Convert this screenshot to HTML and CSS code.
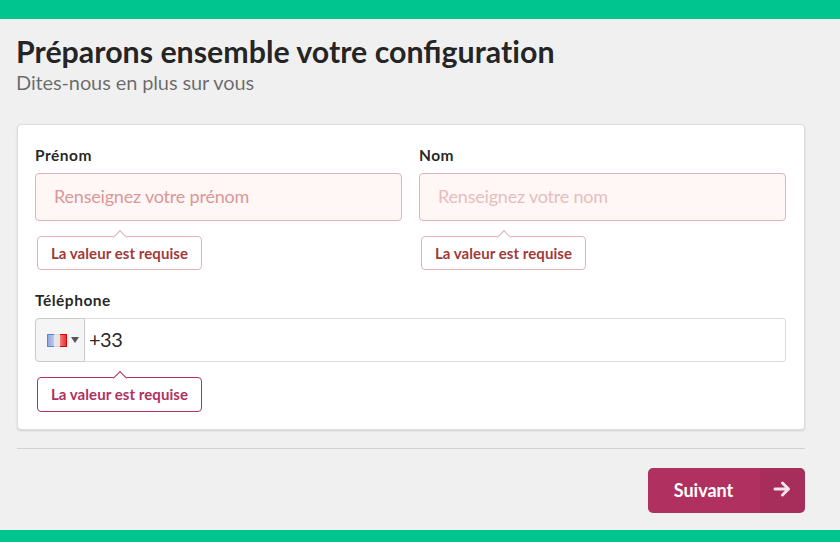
FILE: index.html
```
<!DOCTYPE html>
<html lang="fr">
<head>
    <meta charset="utf-8">
    <title>Configuration</title>
    <link rel="stylesheet" href="styles.css">
</head>
<body>
  <div class="container">
    <h1>Préparons ensemble votre configurat&zwnj;ion</h1>
    <div class="subheader">Dites-nous en plus sur vous</div>

    <form class="segment">
      <div class="fields">
        <div class="field error">
          <label for="firstname">Prénom</label>
          <input type="text" id="firstname" class="focused" placeholder="Renseignez votre prénom">
          <div class="prompt">La valeur est requise</div>
        </div>
        <div class="field error">
          <label for="lastname">Nom</label>
          <input type="text" id="lastname" placeholder="Renseignez votre nom">
          <div class="prompt">La valeur est requise</div>
        </div>
      </div>
      <div class="field phone">
        <label for="phone">Téléphone</label>
        <div class="phone-input">
          <div class="country">
            <svg class="flag" width="20" height="13" viewBox="0 0 20 13">
              <defs>
                <linearGradient id="blue">
                  <stop offset="0" stop-color="#8fa7e2"/>
                  <stop offset="1" stop-color="#bccaec"/>
                </linearGradient>
                <linearGradient id="red">
                  <stop offset="0" stop-color="#f47c7c"/>
                  <stop offset="1" stop-color="#ee3030"/>
                </linearGradient>
              </defs>
              <rect width="20" height="13" fill="#d6d6d6"/>
              <rect x="7" y="1" width="6" height="11" fill="#e9e7e6"/>
              <rect width="7" height="13" fill="#6384d4"/>
              <rect x="1" y="1" width="6" height="11" fill="url(#blue)"/>
              <rect x="13" width="7" height="13" fill="#e00000"/>
              <rect x="13" y="1" width="6" height="11" fill="url(#red)"/>
            </svg>
            <span class="caret"></span>
          </div>
          <input type="text" id="phone" value="+33">
        </div>
        <div class="prompt">La valeur est requise</div>
      </div>
    </form>

    <div class="divider"></div>

    <div class="actions">
      <button type="button" class="next">
        <span class="text">Suivant</span>
        <span class="icon">
          <svg width="18" height="18" viewBox="0 0 18 18">
            <path d="M2 9H15M9.5 3L15.5 9L9.5 15" fill="none" stroke="#f3e3ea" stroke-width="3" stroke-linecap="round" stroke-linejoin="round"/>
          </svg>
        </span>
      </button>
    </div>
  </div>
</body>
</html>
```
FILE: styles.css
```
* {
    box-sizing: border-box;
}

body {
    margin: 0;
    height: 542px;
    border-top: 19px solid #00c58e;
    border-bottom: 12px solid #00c58e;
    background: #f0f0f0;
    color: rgba(0, 0, 0, 0.87);
    font-family: Lato, sans-serif;
    overflow: hidden;
}

.container {
    width: 788px;
    margin-left: 17px;
    padding-top: 13px;
}

h1 {
    margin: 0 0 0 -1px;
    font-size: 30.35px;
    line-height: 38px;
    font-weight: 700;
}

.subheader {
    height: 24px;
    margin-left: -1px;
    font-size: 20px;
    line-height: 24px;
    font-weight: 400;
    letter-spacing: -0.12px;
    color: rgba(0, 0, 0, 0.57);
}

.segment {
    height: 306px;
    margin: 30px 0 0;
    padding: 20px 18px 0 17px;
    background: #fff;
    border: 1px solid #dcdddd;
    border-radius: 4px;
    box-shadow: 0 1px 2px 0 rgba(34, 36, 38, 0.15);
}

.fields {
    display: flex;
    gap: 17px;
}

.field {
    flex: 1;
}

label {
    display: block;
    height: 20px;
    margin-bottom: 8px;
    font-size: 15.5px;
    line-height: 20px;
    font-weight: 700;
    letter-spacing: 0.5px;
}

input {
    display: block;
    width: 100%;
    height: 48px;
    padding: 0 18px 2px;
    border: 1px solid #dedede;
    border-radius: 4px;
    outline: none;
    font-family: Lato, sans-serif;
    font-size: 18px;
    letter-spacing: -0.2px;
    color: rgba(0, 0, 0, 0.87);
}

.error input {
    background: #fff6f6;
    border-color: #e0b4b4;
}

.error input::placeholder {
    color: #e7bdbc;
}

.error input.focused::placeholder {
    color: #da9796;
}

.prompt {
    position: relative;
    width: 165px;
    height: 34px;
    margin: 15px 0 0 2px;
    border: 1px solid #b03060;
    border-radius: 4px;
    background: #fff;
    color: #b03060;
    font-size: 15px;
    line-height: 33px;
    font-weight: 700;
    letter-spacing: 0.07px;
    text-align: center;
}

/* pointer on top of the message */
.prompt::before {
    content: "";
    position: absolute;
    top: -5px;
    left: 77px;
    width: 9px;
    height: 9px;
    background: #fff;
    border: solid #b03060;
    border-width: 1px 0 0 1px;
    transform: rotate(45deg);
}

.error .prompt,
.error .prompt::before {
    border-color: #e0b4b4;
}

.error .prompt {
    color: #9f3a38;
}

.phone {
    margin-top: 20px;
}

.phone .prompt {
    height: 35px;
}

.phone-input {
    display: flex;
    height: 44px;
}

.country {
    display: flex;
    align-items: center;
    width: 50px;
    padding-left: 11px;
    background: #f5f5f5;
    border: 1px solid #cacaca;
    border-radius: 4px 0 0 4px;
}

.caret {
    margin-left: 4px;
    border: solid transparent;
    border-width: 6px 4px 0;
    border-top-color: #555;
}

.phone-input input {
    flex: 1;
    height: 44px;
    padding: 0 4px 2px;
    border-left: 0;
    border-radius: 0 4px 4px 0;
    font-size: 20px;
    letter-spacing: -0.5px;
}

.divider {
    margin-top: 18px;
    border-top: 1px solid #d2d2d2;
}

.actions {
    display: flex;
    justify-content: flex-end;
    margin-top: 19px;
}

.next {
    display: flex;
    width: 157px;
    height: 45px;
    padding: 0;
    border: 0;
    border-radius: 5px;
    overflow: hidden;
    background: #b03060;
    color: #fff;
    font-family: Lato, sans-serif;
    font-size: 18px;
    font-weight: 700;
}

.next .text {
    width: 112px;
    padding-right: 1px;
    line-height: 45px;
}

.next .icon {
    display: flex;
    align-items: center;
    justify-content: center;
    width: 45px;
    height: 45px;
    padding: 0 1px 3px 0;
    background: rgba(0, 0, 0, 0.05);
}
```
